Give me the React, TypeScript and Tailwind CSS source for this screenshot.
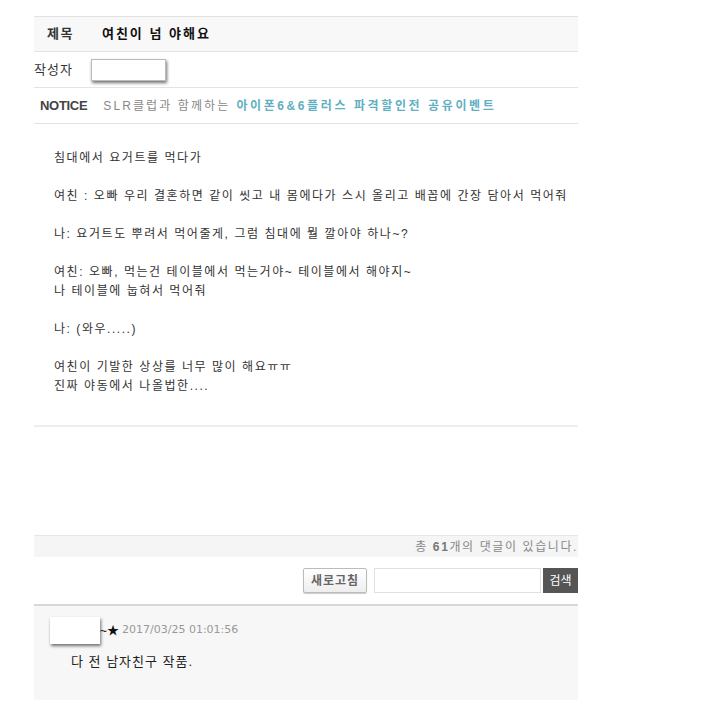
import React from "react";

const font = { fontFamily: '"Liberation Sans", "Noto Sans CJK KR", sans-serif' };

export default function App() {
  const body = [
    ["침대에서 요거트를 먹다가"],
    ["여친 : 오빠 우리 결혼하면 같이 씻고 내 몸에다가 스시 올리고 배꼽에 간장 담아서 먹어줘"],
    ["나: 요거트도 뿌려서 먹어줄게, 그럼 침대에 뭘 깔아야 하나~?"],
    ["여친: 오빠, 먹는건 테이블에서 먹는거야~ 테이블에서 해야지~", "나 테이블에 눕혀서 먹어줘"],
    ["나: (와우.....)"],
    ["여친이 기발한 상상를 너무 많이 해요ㅠㅠ", "진짜 야동에서 나올법한...."],
  ];
  return (
    <div className="w-[702px] h-[711px] bg-white text-[#222] overflow-hidden" style={font}>
      <div className="ml-[34px] w-[544px] pt-[16px]">
        {/* title */}
        <div className="h-[36px] flex items-center bg-[#f8f8f8] border-t border-b border-[#e3e3e3]">
          <span className="ml-[13px] text-[13px] font-bold text-[#333] tracking-[1.5px]">제목</span>
          <span className="ml-[28px] text-[13px] font-bold text-[#111] tracking-[2px]">여친이 넘 야해요</span>
        </div>
        {/* author */}
        <div className="h-[36px] flex items-center border-b border-[#e3e3e3]">
          <span className="text-[13px] text-[#333] tracking-[1px]">작성자</span>
          <div className="ml-[18px] w-[75px] h-[22px] bg-white border border-[#bbb] shadow-[1px_2px_3px_rgba(0,0,0,0.55)]" />
        </div>
        {/* notice */}
        <div className="h-[36px] flex items-center border-b border-[#e3e3e3] text-[12px]">
          <span className="ml-[6px] font-bold text-[#444] text-[13px] tracking-[-0.3px]">NOTICE</span>
          <span className="ml-[16px] text-[#888] tracking-[2.1px]">SLR클럽과 함께하는</span>
          <span className="ml-[6px] font-bold text-[#5fb0c0] tracking-[2.6px]">아이폰6&amp;6플러스 파격할인전 공유이벤트</span>
        </div>
        {/* body */}
        <div className="pt-[25px] pl-[20px] text-[12px] text-[#333] h-[303px] border-b-2 border-[#eeeeee] tracking-[1.55px]">
          {body.map((p, i) => (
            <div key={i} className="mb-[19px]">
              {p.map((l, j) => (
                <div key={j} className="leading-[19px]">{l}</div>
              ))}
            </div>
          ))}
        </div>
        <div className="h-[108px]" />
        {/* comment count */}
        <div className="h-[22px] bg-[#f5f5f5] border-t border-[#e6e6e6] flex items-center justify-end text-[12px] text-[#888] tracking-[1.6px]">
          <span>총 <b className="text-[#777]">61</b>개의 댓글이 있습니다.</span>
        </div>
        {/* search row */}
        <div className="h-[49px] border-b-2 border-[#d8d8d8] flex items-center justify-end">
          <button className="w-[64px] h-[25px] border border-[#bbb] rounded-[2px] bg-gradient-to-b from-white to-[#eee] text-[12px] font-bold text-[#666] shadow-[0_1px_1px_rgba(0,0,0,0.2)] tracking-[1px]">
            새로고침
          </button>
          <div className="ml-[7px] w-[167px] h-[25px] border border-[#e0e0e0] bg-white" />
          <div className="ml-[2px] w-[35px] h-[25px] bg-[#555] text-white text-[12px] flex items-center justify-center">
            검색
          </div>
        </div>
        {/* comment */}
        <div className="h-[94px] bg-[#f7f7f7]">
          <div className="flex items-center pt-[11px] pl-[16px]">
            <div className="w-[50px] h-[27px] bg-white shadow-[1px_2px_3px_rgba(0,0,0,0.55)]" />
            <span className="text-[12px] text-[#111]">~★</span>
            <span className="ml-[3px] text-[11px] text-[#999]" style={{ fontFamily: '"DejaVu Sans", sans-serif' }}>2017/03/25 01:01:56</span>
          </div>
          <div className="pl-[37px] pt-[8px] text-[13px] text-[#222] tracking-[1px]">다 전 남자친구 작품.</div>
        </div>
      </div>
    </div>
  );
}
